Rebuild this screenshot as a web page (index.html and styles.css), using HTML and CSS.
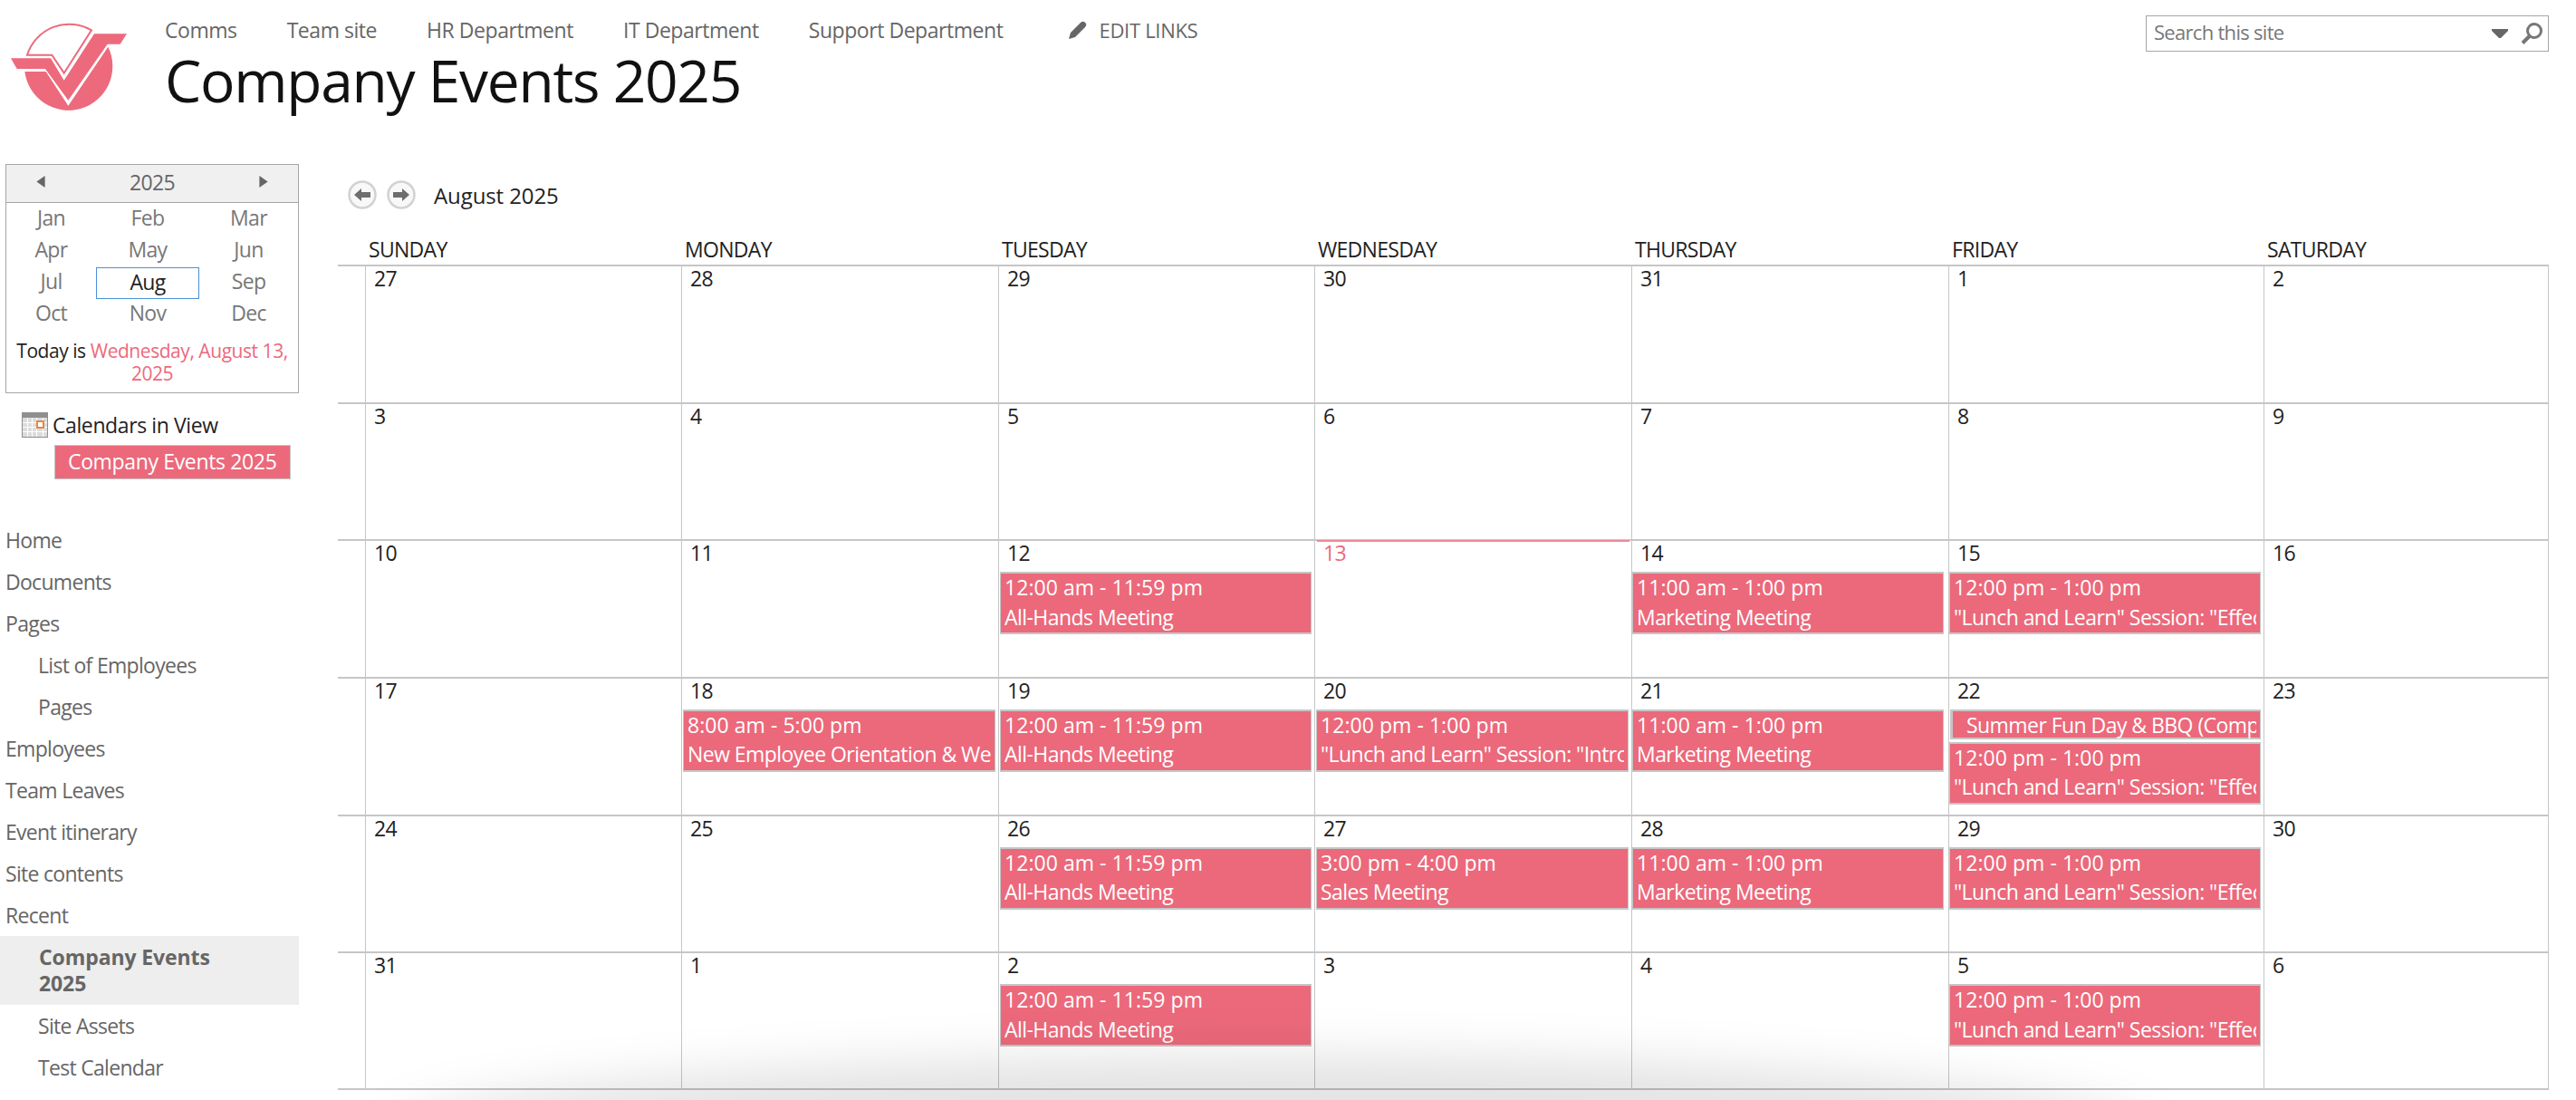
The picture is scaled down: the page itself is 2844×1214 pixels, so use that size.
FILE: index.html
```html
<!DOCTYPE html>
<html lang="en">
<head>
    <meta charset="UTF-8">
    <title>Company Events 2025</title>
    <link rel="stylesheet" href="styles.css">
</head>
<body>
    <header class="top">
        <svg class="logo" viewBox="0 0 480 360" width="160" height="120">
            <path class="logo-fill" d="M82 207 L152 207 L226 320 L358 125 A146 146 0 1 1 82 207 Z"/>
            <path class="logo-fill" d="M36 163 L168 163 L212 236 L312 82 L420 82 L398 116 L356 116 L226 302 L150 198 L56 198 Z"/>
            <path class="logo-line" d="M90 152 A146 146 0 0 1 303 70 L212 212 L172 152 Z"/>
        </svg>
        <div class="head-main">
            <nav class="top-nav">
                <a>Comms</a>
                <a>Team site</a>
                <a>HR Department</a>
                <a>IT Department</a>
                <a>Support Department</a>
                <span class="edit-links">
                    <svg viewBox="0 0 20 20" width="20" height="20"><path d="M0 20 L2 13 L13 2 Q15 0 17 1 L19 3 Q20 5 18 7 L7 18 Z"/></svg>
                    EDIT LINKS
                </span>
            </nav>
            <h1>Company Events 2025</h1>
        </div>
        <div class="search">
            <span class="search-text">Search this site</span>
            <svg class="search-drop" viewBox="0 0 18 10" width="18" height="10"><path d="M0 0 H18 V2 L10 10 H8 L0 2 Z"/></svg>
            <svg class="search-icon" viewBox="0 0 26 26" width="26" height="26"><circle cx="16" cy="10" r="7.5"/><path d="M11 15.5 L3 23.5" stroke-width="4"/></svg>
        </div>
    </header>

    <div class="page">
        <aside class="side">
            <div class="picker">
                <div class="picker-head">
                    <svg viewBox="0 0 10 14" width="10" height="13"><path d="M10 0 V14 L0 7 Z"/></svg>
                    <span>2025</span>
                    <svg viewBox="0 0 10 14" width="10" height="13"><path d="M0 0 V14 L10 7 Z"/></svg>
                </div>
                <div class="months">
                    <span>Jan</span><span>Feb</span><span>Mar</span>
                    <span>Apr</span><span>May</span><span>Jun</span>
                    <span>Jul</span><span class="month-on">Aug</span><span>Sep</span>
                    <span>Oct</span><span>Nov</span><span>Dec</span>
                </div>
                <p class="today">Today is <em>Wednesday, August 13, 2025</em></p>
            </div>

            <div class="in-view">
                <svg viewBox="0 0 29 28" width="29" height="28">
                    <rect width="29" height="28" fill="#8f8f8f"/>
                    <rect x="1" y="6" width="27" height="21" fill="#dcdcdc"/>
                    <path d="M1 11.5 H28 M1 16.5 H28 M1 21.5 H28 M6.5 6 V27 M11.5 6 V27 M16.5 6 V27 M23.5 6 V27" stroke="#fff" stroke-width="1"/>
                    <rect x="17" y="10" width="7" height="7" fill="#fff" stroke="#e08a4a" stroke-width="2"/>
                </svg>
                Calendars in View
            </div>
            <div class="in-view-item">Company Events 2025</div>

            <ul class="side-nav">
                <li>Home</li>
                <li>Documents</li>
                <li>Pages</li>
                <li class="sub">List of Employees</li>
                <li class="sub">Pages</li>
                <li>Employees</li>
                <li>Team Leaves</li>
                <li>Event itinerary</li>
                <li>Site contents</li>
                <li>Recent</li>
                <li class="sub current">Company Events 2025</li>
                <li class="sub">Site Assets</li>
                <li class="sub">Test Calendar</li>
            </ul>
        </aside>

        <main class="main">
            <div class="cal-nav">
                <svg class="round" viewBox="0 0 32 32" width="32" height="32"><circle cx="16" cy="16" r="14.5"/><path d="M7 16 L15 9 V13 H25 V19 H15 V23 Z"/></svg>
                <svg class="round" viewBox="0 0 32 32" width="32" height="32"><circle cx="16" cy="16" r="14.5"/><path d="M25 16 L17 9 V13 H7 V19 H17 V23 Z"/></svg>
                <span class="cal-title">August 2025</span>
            </div>

            <div class="week-head">
                <span></span>
                <span>Sunday</span><span>Monday</span><span>Tuesday</span><span>Wednesday</span><span>Thursday</span><span>Friday</span><span>Saturday</span>
            </div>

            <div class="week">
                <span class="gutter"></span>
                <div class="day"><div class="num">27</div></div>
                <div class="day"><div class="num">28</div></div>
                <div class="day"><div class="num">29</div></div>
                <div class="day"><div class="num">30</div></div>
                <div class="day"><div class="num">31</div></div>
                <div class="day"><div class="num">1</div></div>
                <div class="day"><div class="num">2</div></div>
            </div>

            <div class="week">
                <span class="gutter"></span>
                <div class="day"><div class="num">3</div></div>
                <div class="day"><div class="num">4</div></div>
                <div class="day"><div class="num">5</div></div>
                <div class="day"><div class="num">6</div></div>
                <div class="day"><div class="num">7</div></div>
                <div class="day"><div class="num">8</div></div>
                <div class="day"><div class="num">9</div></div>
            </div>

            <div class="week">
                <span class="gutter"></span>
                <div class="day"><div class="num">10</div></div>
                <div class="day"><div class="num">11</div></div>
                <div class="day mid"><div class="num">12</div>
                    <div class="ev"><div class="time">12:00 am - 11:59 pm</div><div>All-Hands Meeting</div></div>
                </div>
                <div class="day mid is-today"><div class="num">13</div></div>
                <div class="day"><div class="num">14</div>
                    <div class="ev"><div class="time">11:00 am - 1:00 pm</div><div>Marketing Meeting</div></div>
                </div>
                <div class="day"><div class="num">15</div>
                    <div class="ev"><div class="time">12:00 pm - 1:00 pm</div><div>"Lunch and Learn" Session: "Effective Communication"</div></div>
                </div>
                <div class="day"><div class="num">16</div></div>
            </div>

            <div class="week">
                <span class="gutter"></span>
                <div class="day"><div class="num">17</div></div>
                <div class="day mid"><div class="num">18</div>
                    <div class="ev"><div class="time">8:00 am - 5:00 pm</div><div>New Employee Orientation &amp; Welcome</div></div>
                </div>
                <div class="day mid"><div class="num">19</div>
                    <div class="ev"><div class="time">12:00 am - 11:59 pm</div><div>All-Hands Meeting</div></div>
                </div>
                <div class="day mid"><div class="num">20</div>
                    <div class="ev"><div class="time">12:00 pm - 1:00 pm</div><div>"Lunch and Learn" Session: "Introduction"</div></div>
                </div>
                <div class="day"><div class="num">21</div>
                    <div class="ev"><div class="time">11:00 am - 1:00 pm</div><div>Marketing Meeting</div></div>
                </div>
                <div class="day"><div class="num">22</div>
                    <div class="ev ev-allday"><div>Summer Fun Day &amp; BBQ (Company Picnic)</div></div>
                    <div class="ev ev-next"><div class="time">12:00 pm - 1:00 pm</div><div>"Lunch and Learn" Session: "Effective Communication"</div></div>
                </div>
                <div class="day"><div class="num">23</div></div>
            </div>

            <div class="week">
                <span class="gutter"></span>
                <div class="day"><div class="num">24</div></div>
                <div class="day"><div class="num">25</div></div>
                <div class="day mid"><div class="num">26</div>
                    <div class="ev"><div class="time">12:00 am - 11:59 pm</div><div>All-Hands Meeting</div></div>
                </div>
                <div class="day mid"><div class="num">27</div>
                    <div class="ev"><div class="time">3:00 pm - 4:00 pm</div><div>Sales Meeting</div></div>
                </div>
                <div class="day"><div class="num">28</div>
                    <div class="ev"><div class="time">11:00 am - 1:00 pm</div><div>Marketing Meeting</div></div>
                </div>
                <div class="day"><div class="num">29</div>
                    <div class="ev"><div class="time">12:00 pm - 1:00 pm</div><div>"Lunch and Learn" Session: "Effective Communication"</div></div>
                </div>
                <div class="day"><div class="num">30</div></div>
            </div>

            <div class="week last">
                <span class="gutter"></span>
                <div class="day"><div class="num">31</div></div>
                <div class="day"><div class="num">1</div></div>
                <div class="day mid"><div class="num">2</div>
                    <div class="ev"><div class="time">12:00 am - 11:59 pm</div><div>All-Hands Meeting</div></div>
                </div>
                <div class="day"><div class="num">3</div></div>
                <div class="day"><div class="num">4</div></div>
                <div class="day"><div class="num">5</div>
                    <div class="ev"><div class="time">12:00 pm - 1:00 pm</div><div>"Lunch and Learn" Session: "Effective Communication"</div></div>
                </div>
                <div class="day"><div class="num">6</div></div>
            </div>
        </main>
    </div>
    <div class="bottom-shade"></div>
</body>
</html>
```

FILE: styles.css
```css
html, body {
    margin: 0;
    height: 1214px;
    overflow: hidden;
}
body {
    font-family: "Open Sans", "Noto Sans", sans-serif;
    font-size: 23px;
    letter-spacing: -0.7px;
    color: #222;
    background-color: #fff;
    position: relative;
}

/* header */
.top {
    display: flex;
    height: 181px;
}
.logo {
    flex: none;
    margin-top: 10px;
}
.logo-fill {
    fill: #ec6a7c;
}
.logo-line {
    fill: #fff;
    stroke: #ec6a7c;
    stroke-width: 6;
}
.head-main {
    margin-left: 22px;
}
.top-nav {
    display: flex;
    align-items: center;
    gap: 55px;
    height: 32px;
    margin-top: 17px;
    color: #666;
    letter-spacing: -0.45px;
}
.edit-links {
    display: flex;
    align-items: center;
    gap: 13px;
    margin-left: 18px;
    font-size: 22px;
    letter-spacing: -0.3px;
}
.edit-links svg {
    fill: #666;
}
h1 {
    margin: 0;
    font-size: 64px;
    line-height: 80px;
    font-weight: 400;
    letter-spacing: -1.25px;
    color: #111;
}
.search {
    box-sizing: border-box;
    display: flex;
    align-items: center;
    width: 445px;
    height: 40px;
    margin: 17px 30px 0 auto;
    padding: 0 5px 0 8px;
    border: 1px solid #a6a6a6;
    color: #777;
    font-size: 22px;
}
.search-text {
    flex: 1;
    margin-top: -4px;
}
.search-drop {
    fill: #666;
    margin-right: 13px;
}
.search-icon {
    fill: none;
    stroke: #777;
    stroke-width: 3;
}

/* layout */
.page {
    display: flex;
}
.side {
    flex: none;
    width: 330px;
}
.main {
    margin-left: 43px;
}

/* date picker */
.picker {
    box-sizing: border-box;
    width: 324px;
    height: 253px;
    margin-left: 6px;
    border: 1px solid #a6a6a6;
}
.picker-head {
    display: flex;
    align-items: center;
    justify-content: space-between;
    height: 41px;
    padding: 0 33px;
    border-bottom: 1px solid #a6a6a6;
    background-color: #f0f0f0;
    color: #666;
}
.picker-head span {
    margin-top: -3px;
}
.picker-head svg {
    fill: #666;
    margin-top: -4px;
}
.months {
    display: grid;
    grid-template-columns: 99px 114px 1fr;
    grid-auto-rows: 35px;
    margin-top: 1px;
    color: #777;
    text-align: center;
    line-height: 30px;
}
.month-on {
    box-sizing: border-box;
    border: 1px solid #4a90d9;
    color: #222;
}
.today {
    margin: 10px 6px 0;
    font-size: 21px;
    letter-spacing: -0.45px;
    line-height: 25px;
    text-align: center;
}
.today em {
    font-style: normal;
    color: #ec6a7c;
}

/* calendars in view */
.in-view {
    display: flex;
    align-items: center;
    gap: 5px;
    margin: 20px 0 0 24px;
    height: 30px;
    letter-spacing: -0.4px;
}
.in-view-item {
    box-sizing: border-box;
    width: 261px;
    height: 38px;
    margin: 7px 0 0 60px;
    padding-left: 14px;
    border: 1px solid #c6c6c6;
    background-color: #eb697b;
    color: #fff;
    line-height: 34px;
    letter-spacing: -0.35px;
}

/* left navigation */
.side-nav {
    list-style: none;
    margin: 44px 0 0;
    padding: 0;
    color: #666;
}
.side-nav li {
    padding: 0 0 0 6px;
    line-height: 46px;
}
.side-nav .sub {
    padding-left: 42px;
}
.side-nav .current {
    margin: 0;
    padding: 9px 50px 9px 43px;
    line-height: 29px;
    background-color: #eee;
    font-weight: 700;
    letter-spacing: -0.1px;
}

/* calendar */
.cal-nav {
    display: flex;
    align-items: center;
    height: 68px;
    padding-left: 11px;
    gap: 11px;
}
.round circle {
    fill: #f8f8f8;
    stroke: #d2d2d2;
    stroke-width: 2.5;
}
.round path {
    fill: #6e6e6e;
}
.cal-title {
    margin-left: 9px;
    font-size: 24px;
    letter-spacing: -0.1px;
}
.week-head, .week {
    display: grid;
    grid-template-columns: 30px 349px 350px 349px 350px 350px 348px 315px;
}
.week-head {
    height: 43px;
    align-items: end;
    line-height: 30px;
    text-transform: uppercase;
}
.week-head span {
    padding: 0 0 2px 4px;
}
.week {
    box-sizing: border-box;
    height: 151.67px;
    border-top: 2px solid #c6c6c6;
}
.week.last {
    height: 153px;
    border-bottom: 2px solid #c6c6c6;
}
.day {
    min-width: 0;
    border-left: 1px solid #c6c6c6;
}
.day:last-child {
    border-right: 1px solid #c6c6c6;
}
.num {
    height: 34px;
    padding-left: 9px;
    line-height: 27px;
}
.is-today {
    position: relative;
}
.is-today .num {
    color: #ec6a7c;
}
.is-today::before {
    content: "";
    position: absolute;
    top: -1px;
    left: 2px;
    right: 2px;
    height: 2px;
    background-color: #f08a98;
}
.ev {
    box-sizing: border-box;
    height: 69px;
    margin: 0 5px 0 0;
    padding: 0 4px;
    border: solid #c6c6c6;
    border-width: 2px 1px;
    background-color: #eb697b;
    color: #fff;
    line-height: 32.5px;
    letter-spacing: -0.55px;
    white-space: nowrap;
}
.ev div {
    overflow: hidden;
}
.ev .time {
    margin-top: -1px;
    letter-spacing: 0.05px;
}
.mid .ev {
    margin: 0 3px 0 1px;
}
.day:nth-child(7) .ev {
    margin-right: 3px;
}
.day .ev-allday {
    height: 33px;
    margin-left: 1px;
    padding-left: 15px;
    border-left-width: 3px;
    line-height: 30px;
}
.ev-next {
    margin-top: 3px;
}

/* soft shadow along the bottom of the window */
.bottom-shade {
    position: absolute;
    left: 0;
    right: 0;
    bottom: 0;
    height: 120px;
    overflow: hidden;
    pointer-events: none;
}
.bottom-shade::before {
    content: "";
    position: absolute;
    left: 430px;
    top: 70px;
    width: 1950px;
    height: 90px;
    border-radius: 50% 50% 0 0 / 100% 100% 0 0;
    background-color: rgba(0, 0, 0, 0.11);
    filter: blur(26px);
}
```
